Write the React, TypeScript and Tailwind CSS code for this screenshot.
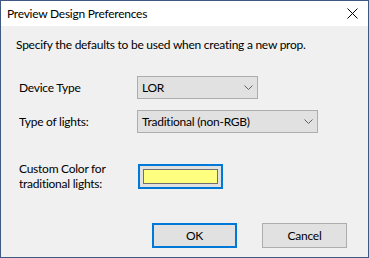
import React from "react";

const font = { fontFamily: 'Lato, "Noto Sans", sans-serif' };

function Chevron() {
  return (
    <svg width="9" height="5" viewBox="0 0 9 5" className="block">
      <path d="M0.5 0.5 L4.5 4.5 L8.5 0.5" fill="none" stroke="#606060" strokeWidth="1" />
    </svg>
  );
}

function Select({ value, width }: { value: string; width: string }) {
  return (
    <div
      className={`${width} h-[23px] bg-[#e1e1e1] border border-[#adadad] flex items-center justify-between pl-[4px] pr-[4px] text-[12px] text-black`}
    >
      <span>{value}</span>
      <Chevron />
    </div>
  );
}

export default function App() {
  return (
    <div
      className="w-[369px] h-[258px] border border-[#3e5a82] bg-[#f0f0f0] flex flex-col text-black text-[12px] leading-[16px] tracking-[-0.25px]"
      style={font}
    >
      <div className="h-[25px] bg-white flex items-center justify-between pl-[6px] pr-[10px]">
        <span className="text-[12px]">Preview Design Preferences</span>
        <svg width="11" height="11" viewBox="0 0 11 11">
          <path d="M0.5 0.5 L10.5 10.5 M10.5 0.5 L0.5 10.5" stroke="#000" strokeWidth="1" />
        </svg>
      </div>
      <div className="pl-[15px] pt-[11px]">Specify the defaults to be used when creating a new prop.</div>
      <div className="flex items-center mt-[23px] pl-[18px]">
        <div className="w-[118px]">Device Type</div>
        <Select value="LOR" width="w-[121px]" />
      </div>
      <div className="flex items-center mt-[11px] pl-[18px]">
        <div className="w-[118px]">Type of lights:</div>
        <Select value="Traditional (non-RGB)" width="w-[181px]" />
      </div>
      <div className="flex items-center mt-[28px] pl-[18px]">
        <div className="w-[119px] leading-[15px]">
          Custom Color for
          <br />
          traditional lights:
        </div>
        <div className="w-[85px] h-[25px] border-2 border-[#0078d7] bg-[#e1e1e1] p-[3px]">
          <div className="w-full h-full bg-[#ffff80] border border-[#707070]" />
        </div>
      </div>
      <div className="flex mt-[32px] pl-[151px] gap-[25px]">
        <div className="w-[85px] h-[25px] border-2 border-[#0078d7] bg-[#e1e1e1] flex items-center justify-center">
          OK
        </div>
        <div className="w-[85px] h-[25px] border border-[#adadad] bg-[#e1e1e1] flex items-center justify-center">
          Cancel
        </div>
      </div>
    </div>
  );
}
